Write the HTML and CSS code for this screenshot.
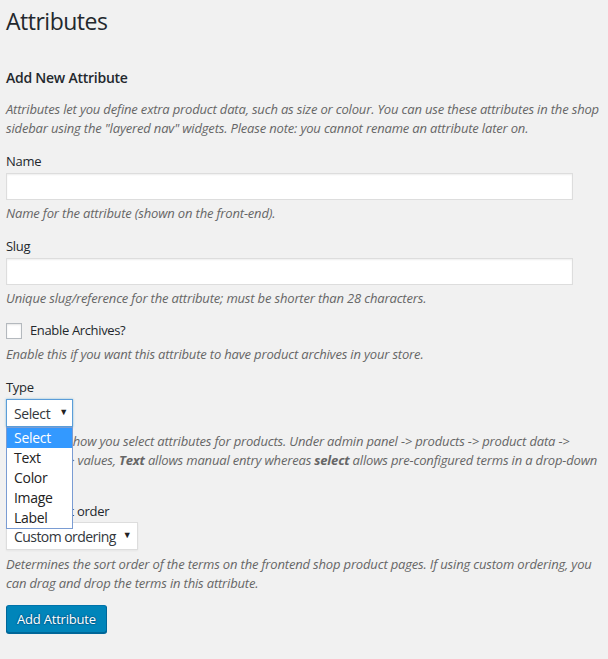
FILE: index.html
```html
<!DOCTYPE html>
<html lang="en">
<head>
<meta charset="utf-8">
<title>Attributes</title>
<link rel="stylesheet" href="styles.css">
</head>
<body>
<div class="wrap">
  <h1 class="page-title">Attributes</h1>
  <h2 class="section-title">Add New Attribute</h2>
  <p class="desc intro">Attributes let you define extra product data, such as size or colour. You can use these attributes in the shop sidebar using the "layered nav" widgets. Please note: you cannot rename an attribute later on.</p>

  <div class="field">
    <label class="label">Name</label>
    <div class="input"></div>
    <p class="desc">Name for the attribute (shown on the front-end).</p>
  </div>

  <div class="field">
    <label class="label">Slug</label>
    <div class="input"></div>
    <p class="desc">Unique slug/reference for the attribute; must be shorter than 28 characters.</p>
  </div>

  <div class="field">
    <div class="check-row">
      <span class="checkbox"></span>
      <span class="check-label">Enable Archives?</span>
    </div>
    <p class="desc desc-tight">Enable this if you want this attribute to have product archives in your store.</p>
  </div>

  <div class="field">
    <label class="label">Type</label>
    <div class="select-holder">
      <div class="select focused"><span class="select-text">Select</span><span class="arrow">&#9660;</span></div>
      <ul class="dropdown">
        <li class="option active">Select</li>
        <li class="option">Text</li>
        <li class="option">Color</li>
        <li class="option">Image</li>
        <li class="option">Label</li>
      </ul>
    </div>
    <p class="desc">Determines how you select attributes for products. Under admin panel -&gt; products -&gt; product data -&gt; attributes -&gt; values, <strong>Text</strong> allows manual entry whereas <strong>select</strong> allows pre-configured terms in a drop-down list.</p>
  </div>

  <div class="field field-sort">
    <label class="label">Default sort order</label>
    <div class="select"><span class="select-text">Custom ordering</span><span class="arrow">&#9660;</span></div>
    <p class="desc">Determines the sort order of the terms on the frontend shop product pages. If using custom ordering, you can drag and drop the terms in this attribute.</p>
  </div>

  <div class="actions">
    <button class="button-primary" type="button">Add Attribute</button>
  </div>
</div>
</body>
</html>
```

FILE: styles.css
```css
html, body {
  margin: 0;
  padding: 0;
  background: #f1f1f1;
}
body {
  font-family: "Open Sans", "Noto Sans", sans-serif;
  font-size: 13px;
  line-height: 19px;
  color: #444;
  width: 608px;
  height: 659px;
  overflow: hidden;
}
.wrap {
  width: 597px;
  padding: 0 5px 0 6px;
}
.page-title {
  margin: 0;
  padding: 7px 0 0;
  font-size: 23px;
  line-height: 29px;
  font-weight: 400;
  letter-spacing: -0.5px;
  color: #23282d;
}
.section-title {
  margin: 32px 0 0;
  font-size: 14px;
  line-height: 20px;
  font-weight: 600;
  letter-spacing: -0.25px;
  color: #23282d;
}
.desc {
  margin: 0;
  font-style: italic;
  color: #666;
  letter-spacing: -0.17px;
}
.intro {
  margin-top: 12px;
}
.field {
  margin-top: 14px;
}
.field-sort {
  margin-top: 13px;
}
.label {
  display: block;
  color: #23282d;
  letter-spacing: -0.3px;
}
.input {
  box-sizing: border-box;
  width: 567px;
  height: 27px;
  margin-top: 2px;
  background: #fff;
  border: 1px solid #ddd;
  box-shadow: inset 0 1px 2px rgba(0, 0, 0, 0.07);
}
.input + .desc {
  margin-top: 4px;
}
.check-row {
  display: flex;
  align-items: center;
  gap: 8px;
  margin-top: -1px;
}
.checkbox {
  box-sizing: border-box;
  width: 16px;
  height: 16px;
  background: #fff;
  border: 1px solid #b4b9be;
  box-shadow: inset 0 1px 2px rgba(0, 0, 0, 0.1);
}
.check-label {
  color: #23282d;
  letter-spacing: -0.35px;
}
.desc-tight {
  margin-top: 5px;
}
.select-holder {
  position: relative;
}
.select {
  box-sizing: border-box;
  display: inline-flex;
  align-items: center;
  height: 28px;
  margin-top: 2px;
  padding: 0 6px 0 7px;
  background: #fff;
  border: 1px solid #ddd;
  box-shadow: 0 1px 2px rgba(0, 0, 0, 0.05);
  font-size: 14px;
  letter-spacing: -0.4px;
  color: #32373c;
}
.field-sort .select {
  margin-top: 1px;
  letter-spacing: -0.55px;
}
.field-sort .arrow {
  margin-left: 7px;
}
.select.focused {
  width: 67px;
  border-color: #5b9dd9;
  box-shadow: 0 0 2px rgba(30, 140, 190, 0.5);
}
.select-text {
  flex: 1;
}
.arrow {
  font-size: 9px;
  margin-left: 9px;
  margin-top: -3px;
  color: #222;
}
.select + .desc,
.select-holder + .desc {
  margin-top: 5px;
}
.dropdown {
  position: absolute;
  left: 0;
  top: 30px;
  z-index: 5;
  box-sizing: border-box;
  width: 67px;
  margin: 0;
  padding: 0;
  list-style: none;
  background: #fff;
  border: 1px solid #7a9cd3;
}
.option {
  height: 20px;
  line-height: 20px;
  padding: 0 7px;
  font-size: 14px;
  letter-spacing: -0.3px;
  color: #222;
}
.option.active {
  background: #3399ff;
  color: #fff;
}
.actions {
  margin-top: 12px;
}
.button-primary {
  box-sizing: border-box;
  height: 28px;
  padding: 0 10px 1px;
  margin: 0;
  font-family: inherit;
  font-size: 13px;
  line-height: 26px;
  letter-spacing: -0.2px;
  color: #fff;
  background: #0085ba;
  border: 1px solid;
  border-color: #0073aa #006799 #006799;
  border-radius: 3px;
  box-shadow: 0 1px 0 #006799;
  text-shadow: 0 -1px 1px #006799, 1px 0 1px #006799, 0 1px 1px #006799, -1px 0 1px #006799;
}
```
